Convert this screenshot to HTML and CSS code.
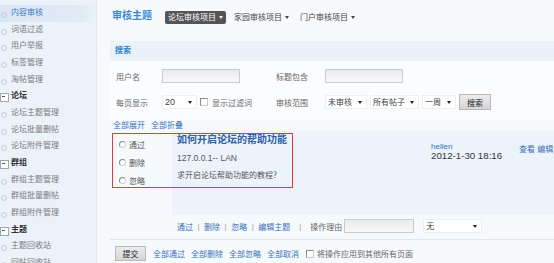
FILE: index.html
```html
<!DOCTYPE html>
<html lang="zh-CN">
<head>
<meta charset="utf-8">
<title>审核主题</title>
<link rel="stylesheet" href="styles.css">
</head>
<body>
<div class="app">
  <aside class="side">
    <ul class="nav">
      <li class="item active">内容审核</li>
      <li class="item">词语过滤</li>
      <li class="item">用户举报</li>
      <li class="item">标签管理</li>
      <li class="item">淘帖管理</li>
      <li class="group">论坛</li>
      <li class="item">论坛主题管理</li>
      <li class="item">论坛批量删帖</li>
      <li class="item">论坛附件管理</li>
      <li class="group">群组</li>
      <li class="item">群组主题管理</li>
      <li class="item">群组批量删帖</li>
      <li class="item">群组附件管理</li>
      <li class="group">主题</li>
      <li class="item">主题回收站</li>
      <li class="item">回帖回收站</li>
    </ul>
  </aside>
  <main class="main">
    <div class="head">
      <h1 class="title">审核主题</h1>
      <ul class="tabs">
        <li class="tab on">论坛审核项目</li>
        <li class="tab">家园审核项目</li>
        <li class="tab">门户审核项目</li>
      </ul>
    </div>
    <section class="search">
      <div class="search-hd">搜索</div>
      <div class="search-bd">
        <label class="lbl">用户名</label>
        <div class="ctl"><input class="txt" type="text"></div>
        <label class="lbl">标题包含</label>
        <div class="ctl"><input class="txt" type="text"></div>
        <label class="lbl">每页显示</label>
        <div class="ctl">
          <span class="sel w35"><select class="num"><option>20</option></select></span>
          <input type="checkbox" class="chk"><span class="ctext">显示过滤词</span>
        </div>
        <label class="lbl">审核范围</label>
        <div class="ctl">
          <span class="sel w42"><select><option>未审核</option></select></span>
          <span class="sel w49"><select><option>所有帖子</option></select></span>
          <span class="sel w34"><select><option>一周</option></select></span>
          <button class="btn">搜索</button>
        </div>
      </div>
    </section>
    <div class="toggles"><a>全部展开</a><a>全部折叠</a></div>
    <div class="post">
      <div class="ops">
        <label class="opt"><input type="radio" name="m1" class="radio">通过</label>
        <label class="opt"><input type="radio" name="m1" class="radio">删除</label>
        <label class="opt"><input type="radio" name="m1" class="radio">忽略</label>
      </div>
      <div class="body">
        <div class="content">
          <div class="ptitle">如何开启论坛的帮助功能</div>
          <div class="ip">127.0.0.1-- LAN</div>
          <div class="desc">求开启论坛帮助功能的教程？</div>
        </div>
        <div class="author">
          <div class="uname">hellen</div>
          <div class="time">2012-1-30 18:16</div>
        </div>
        <div class="acts"><a>查看</a> <a>编辑</a></div>
      </div>
      <div class="mark"></div>
    </div>
    <div class="actrow">
      <a>通过</a><span class="sep">|</span><a>删除</a><span class="sep">|</span><a>忽略</a><span class="sep">|</span><a>编辑主题</a><span class="sep wide">|</span><span class="gray">操作理由</span>
      <input class="txt reason" type="text">
      <span class="sel w59"><select><option>无</option></select></span>
    </div>
    <div class="foot">
      <button class="btn submit">提交</button>
      <a class="fl">全部通过</a><a class="fl">全部删除</a><a class="fl">全部忽略</a><a class="fl">全部取消</a>
      <input type="checkbox" class="chk all"><span class="gray">将操作应用到其他所有页面</span>
    </div>
  </main>
</div>
</body>
</html>
```

FILE: styles.css
```css
* { box-sizing: border-box; margin: 0; padding: 0; }
body {
  font-family: "Liberation Sans", "Noto Sans CJK SC", sans-serif;
  font-size: 8px;
  color: #555;
  background: #f7fafd;
  overflow: hidden;
}
a { color: #3a70b8; text-decoration: none; }
.gray { color: #666; }

.app { display: flex; height: 263px; }

/* sidebar */
.side {
  width: 97px;
  flex: none;
  background: #ecf2f9;
  border-right: 1px solid #dde6f0;
  padding-top: 5px;
  overflow: hidden;
}
.nav { list-style: none; }
.nav li {
  height: 16.67px;
  line-height: 16.67px;
  padding-left: 11px;
  position: relative;
  white-space: nowrap;
}
.item { color: #7a7a7a; }
.item::before {
  content: "";
  position: absolute;
  left: 1px;
  top: 7px;
  width: 4px;
  height: 4px;
  border: 1px solid #c6cdd6;
  border-radius: 50%;
}
.item.active {
  background: linear-gradient(90deg, #dae6f4, #e1ebf6 85%, #ecf2f9);
  color: #3b78c4;
}
.group { color: #333; font-weight: bold; }
.group::before {
  content: "";
  position: absolute;
  left: 0;
  top: 5px;
  width: 7px;
  height: 7px;
  border: 1px solid #9ea7b1;
  background: #fff;
}
.group::after {
  content: "";
  position: absolute;
  left: 2px;
  top: 8px;
  width: 3px;
  height: 1px;
  background: #555;
}

/* main */
.main { flex: 1; min-width: 0; padding-left: 13px; }
.head {
  height: 41px;
  display: flex;
  align-items: flex-start;
  padding: 10px 0 0 2px;
}
.title {
  font-size: 10px;
  line-height: 12px;
  font-weight: bold;
  color: #3a8ad4;
}
.tabs { list-style: none; display: flex; gap: 5px; margin: 1px 0 0 13px; }
.tab {
  line-height: 13px;
  height: 13px;
  padding: 0 3px;
  color: #444;
  border-radius: 2px;
  display: flex;
  align-items: center;
}
.tab::after {
  content: "";
  margin-left: 3px;
  border-left: 2.5px solid transparent;
  border-right: 2.5px solid transparent;
  border-top: 3px solid currentColor;
}
.tab.on { background: #555; color: #fff; }

.search-hd {
  height: 20px;
  line-height: 20px;
  background: #eaf1f9;
  color: #2f7fc8;
  font-weight: bold;
  padding-left: 5px;
}
.search-bd {
  display: grid;
  grid-template-columns: 46px 114px 49px 1fr;
  grid-auto-rows: 16px;
  row-gap: 10px;
  align-items: center;
  padding: 7px 0 9px 6px;
  background: #fbfcfe;
}
.lbl { color: #666; }
.ctl { display: flex; align-items: center; height: 16px; }
.txt {
  width: 78px;
  height: 14px;
  border: 1px solid #c8ccd1;
  background: linear-gradient(#ebebeb, #f8f8f8);
}
.sel { position: relative; display: inline-block; height: 14px; margin-right: 3px; }
.sel select {
  appearance: none;
  -webkit-appearance: none;
  width: 100%;
  height: 14px;
  border: 1px solid #eceff3;
  background: #fff;
  font: inherit;
  color: #444;
  padding-left: 2px;
}
.sel select.num { font-size: 9px; }
.sel::after {
  content: "";
  position: absolute;
  right: 5px;
  top: 6px;
  border-left: 2px solid transparent;
  border-right: 2px solid transparent;
  border-top: 3px solid #222;
}
.w35 { width: 35px; }
.w42 { width: 42px; }
.w49 { width: 49px; }
.w34 { width: 34px; }
.w59 { width: 59px; margin-left: 9px; }
.chk {
  appearance: none;
  -webkit-appearance: none;
  width: 8px;
  height: 8px;
  border: 1px solid #8d8d8d;
  border-right-color: #ccc;
  border-bottom-color: #ccc;
  background: #fff;
}
.ctl .chk { margin-left: 0; }
.ctext { margin-left: 4px; color: #666; }
.btn {
  height: 16px;
  width: 32px;
  border: 1px solid #b9b9b9;
  background: linear-gradient(#ececec, #d6d6d6);
  font: inherit;
  color: #222;
}

.toggles { line-height: 11px; padding: 1px 0 0 3px; display: flex; gap: 6px; }

/* post */
.post { display: flex; height: 84px; position: relative; }
.ops { width: 62px; padding: 4px 0 0 9px; }
.opt { display: flex; align-items: center; height: 18px; color: #555; }
.radio {
  appearance: none;
  -webkit-appearance: none;
  width: 7px;
  height: 7px;
  border: 1px solid #8a8a8a;
  border-right-color: #d0d0d0;
  border-bottom-color: #d0d0d0;
  border-radius: 50%;
  background: #fff;
  margin-right: 3px;
}
.body { flex: 1; display: flex; background: #edf3fa; }
.content { flex: 1; padding: 2px 0 0 5px; }
.ptitle { font-size: 10px; line-height: 14px; font-weight: bold; color: #2d61a8; }
.ip { line-height: 22px; font-size: 8.5px; color: #555; }
.desc { line-height: 14px; color: #555; }
.author { width: 88px; padding-top: 11px; }
.uname { color: #3a70b8; line-height: 9px; }
.time { font-size: 9.7px; line-height: 9px; color: #333; }
.acts { width: 35px; padding-top: 14px; line-height: 10px; white-space: nowrap; overflow: hidden; }
.mark {
  position: absolute;
  left: 2px;
  top: 2px;
  width: 181px;
  height: 55px;
  border: 1px solid #e23b3b;
  pointer-events: none;
}

.actrow {
  display: flex;
  align-items: center;
  height: 14px;
  margin-top: 4px;
  padding-left: 67px;
  white-space: nowrap;
}
.sep { color: #999; margin: 0 4.5px; }
.sep.wide { margin: 0 9px; }
.reason { width: 70px; margin-left: 2px; }

.foot {
  margin-top: 6px;
  border-top: 1px solid #dfe6ee;
  padding: 6px 0 0 5px;
  display: flex;
  align-items: center;
  white-space: nowrap;
}
.submit { width: 31px; height: 15px; }
.fl { margin-left: 6px; }
.fl:first-of-type { margin-left: 7px; }
.foot .chk { margin: 0 3px 0 7px; }
```
